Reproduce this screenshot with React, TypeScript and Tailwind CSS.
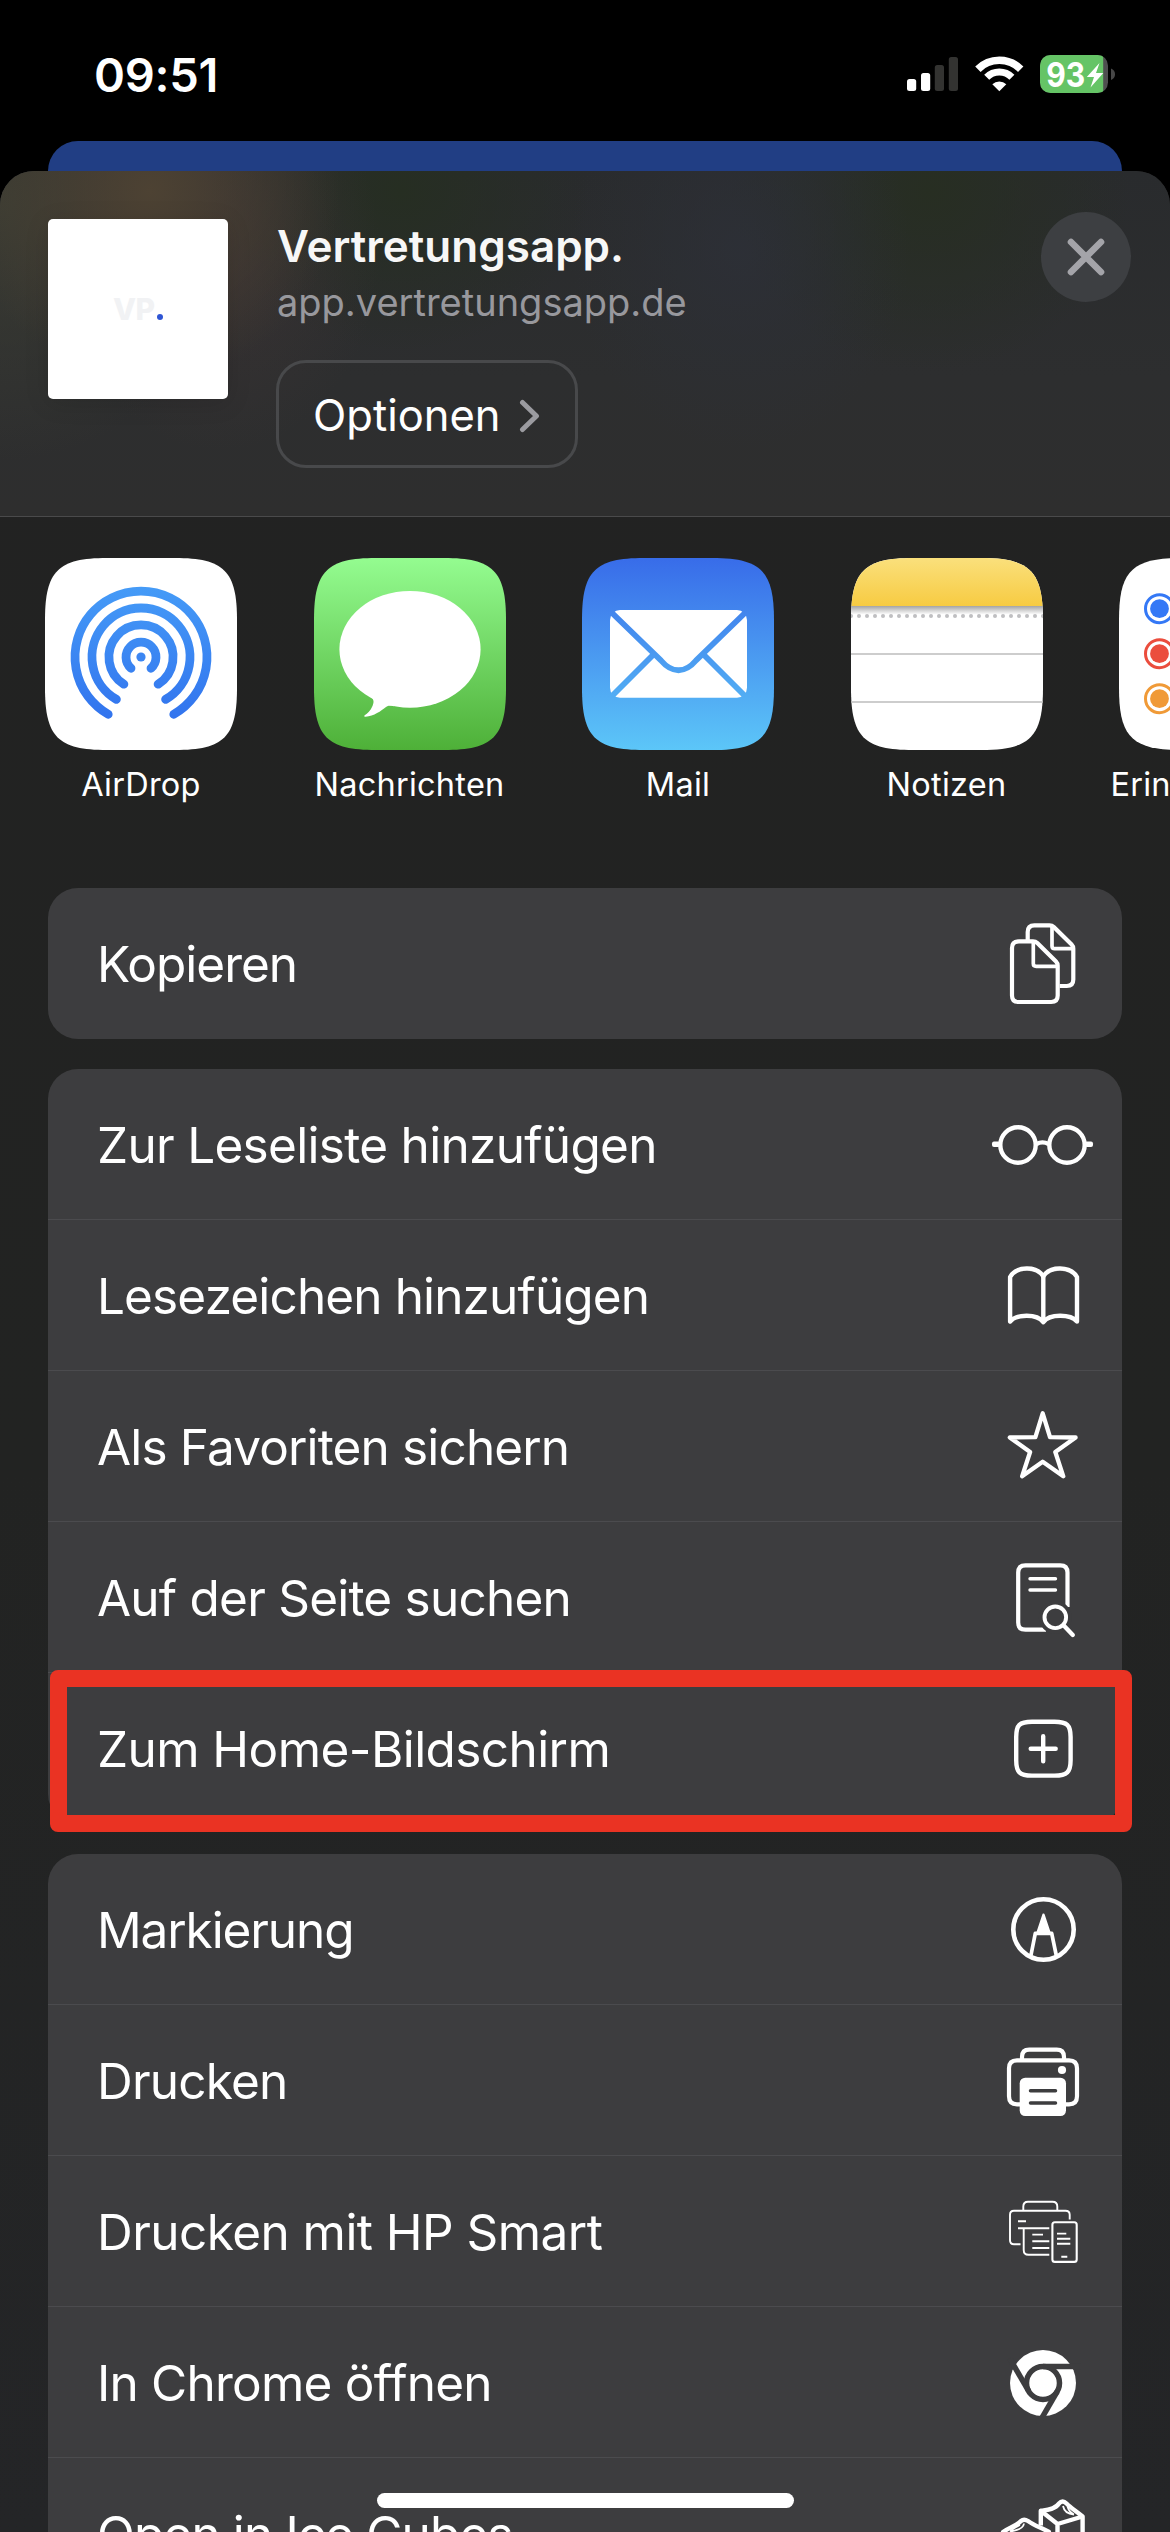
import type { ReactNode } from "react";

const TILE =
  "M62 0H130C179 0 192 13 192 62V130C192 179 179 192 130 192H62C13 192 0 179 0 130V62C0 13 13 0 62 0Z";

function StatusIcons() {
  return (
    <svg width="212" height="40" viewBox="905 54 212 40" fill="none">
      <rect x="907" y="79" width="9.2" height="12" rx="2.5" fill="#fff" />
      <rect x="921" y="73" width="9.2" height="18" rx="2.5" fill="#fff" />
      <rect x="934.8" y="65" width="9.2" height="26" rx="2.5" fill="#333331" />
      <rect x="948.8" y="57" width="9.2" height="34" rx="2.5" fill="#333331" />
      <g stroke="#fff">
        <path d="M977.9 69.2A30.2 30.2 0 0 1 1020.7 69.2" strokeWidth="7.6" />
        <path d="M986.7 77.2A17.6 17.6 0 0 1 1011.9 77.2" strokeWidth="7" />
      </g>
      <path d="M992.3 84.2A10.2 10.2 0 0 1 1006.3 84.2L999.3 91.2Z" fill="#fff" />
      <clipPath id="battery">
        <rect x="1040" y="55" width="68" height="38" rx="10.5" />
      </clipPath>
      <g clipPath="url(#battery)">
        <rect x="1040" y="55" width="68" height="38" fill="#4f4f50" />
        <rect x="1040" y="55" width="63.2" height="38" fill="#65c466" />
      </g>
      <path d="M1111 68.5Q1115 70 1115 74.2T1111 80Z" fill="#474747" />
      <text
        x="1046.2"
        y="86.6"
        fill="#fff"
        fontFamily="Inter, sans-serif"
        fontSize="34"
        fontWeight="700"
        textLength="39"
        lengthAdjust="spacingAndGlyphs"
      >
        93
      </text>
      <path d="M1099.5 63L1086.8 77H1094L1090.5 87.4L1103.3 73H1096Z" fill="#fff" />
    </svg>
  );
}

function AirDropIcon() {
  return (
    <svg width="192" height="192" viewBox="0 0 192 192" fill="none">
      <defs>
        <linearGradient id="air" gradientUnits="userSpaceOnUse" x1="0" y1="28" x2="0" y2="160">
          <stop stopColor="#459bf7" />
          <stop offset="1" stopColor="#3274ee" />
        </linearGradient>
      </defs>
      <path d={TILE} fill="#fff" />
      <g stroke="url(#air)" strokeWidth="8.8" strokeLinecap="round">
        <path d="M63.2 156.3A66 66 0 1 1 128.8 156.3" />
        <path d="M71.4 141.4A49 49 0 1 1 120.6 141.4" />
        <path d="M78.9 126.2A32.1 32.1 0 1 1 113.1 126.2" />
        <path d="M86 110.3A15 15 0 1 1 106 110.3" />
      </g>
      <circle cx="96" cy="99" r="4.6" fill="#3c86f2" />
    </svg>
  );
}

function MessagesIcon() {
  return (
    <svg width="192" height="192" viewBox="0 0 192 192">
      <defs>
        <linearGradient id="msg" x1="0" y1="0" x2="0" y2="1">
          <stop stopColor="#94fc90" />
          <stop offset="1" stopColor="#4eb038" />
        </linearGradient>
      </defs>
      <path d={TILE} fill="url(#msg)" />
      <ellipse cx="96" cy="91.3" rx="70.6" ry="58.4" fill="#fff" />
      <path d="M54 136C60 141 60.5 143 58.5 148C56.5 153 53.5 155.5 50.7 157.3C49.8 158.2 50.4 158.9 51.6 158.8C60 158 67 153 72 149C74 147.5 76 147.5 80 148.2L90 130L56 125Z" fill="#fff" />
    </svg>
  );
}

function MailIcon() {
  return (
    <svg width="192" height="192" viewBox="0 0 192 192" fill="none">
      <defs>
        <linearGradient id="mail" gradientUnits="userSpaceOnUse" x1="0" y1="0" x2="0" y2="192">
          <stop stopColor="#386ce9" />
          <stop offset="1" stopColor="#5cc6f8" />
        </linearGradient>
      </defs>
      <path d={TILE} fill="url(#mail)" />
      <rect x="28" y="52" width="137" height="87.7" rx="10" fill="#fff" />
      <g stroke="url(#mail)" strokeWidth="5.8">
        <path d="M27 52L79 102.5C90 115.5 103 115.5 114 102.5L166 52" />
        <path d="M27 141L71 97M166 141L122 97" />
      </g>
    </svg>
  );
}

function NotesIcon() {
  const dots = Array.from({ length: 25 }, (_, i) => i * 8);
  return (
    <svg width="192" height="192" viewBox="0 0 192 192">
      <defs>
        <linearGradient id="noteTop" x1="0" y1="0" x2="0" y2="1">
          <stop stopColor="#fae07c" />
          <stop offset="1" stopColor="#f7cb42" />
        </linearGradient>
        <linearGradient id="noteShade" x1="0" y1="0" x2="0" y2="1">
          <stop stopColor="#a4a4a4" />
          <stop offset="1" stopColor="#ffffff" />
        </linearGradient>
        <clipPath id="noteClip">
          <path d={TILE} />
        </clipPath>
      </defs>
      <g clipPath="url(#noteClip)">
        <rect width="192" height="192" fill="#fff" />
        <rect width="192" height="48" fill="url(#noteTop)" />
        <rect y="48" width="192" height="8.5" fill="url(#noteShade)" />
        {dots.map((x) => (
          <circle key={x} cx={x} cy="58" r="2" fill="#bfbfc1" />
        ))}
        <rect y="95" width="192" height="2" fill="#cdcdcd" />
        <rect y="143" width="192" height="2" fill="#cdcdcd" />
      </g>
    </svg>
  );
}

function RemindersIcon() {
  const items: [number, string][] = [
    [50.7, "#3478f6"],
    [95.7, "#eb4d3d"],
    [140.7, "#f09a37"],
  ];
  return (
    <svg width="192" height="192" viewBox="0 0 192 192">
      <path d={TILE} fill="#fff" />
      {items.map(([y, color]) => (
        <g key={color}>
          <circle cx="40.5" cy={y} r="14" fill="none" stroke={color} strokeWidth="3" />
          <circle cx="40.5" cy={y} r="9.4" fill={color} />
        </g>
      ))}
    </svg>
  );
}

function RowIcon({ children, stroke = 4.4 }: { children: ReactNode; stroke?: number }) {
  return (
    <svg
      width="120"
      height="150"
      viewBox="0 0 120 150"
      fill="none"
      stroke="#fff"
      strokeWidth={stroke}
      strokeLinejoin="round"
      className="shrink-0"
    >
      {children}
    </svg>
  );
}

const copyIcon = (
  <RowIcon stroke={4.2}>
    <path d="M36 53.3H50Q52.5 53.3 54.3 55.1L73 73.5Q74.7 75.2 74.7 77.7V107.5Q74.7 114 68.2 114H35.5Q29 114 29 107.5V60Q29 53.3 36 53.3Z" />
    <path d="M50.3 54V75.5Q50.3 78.3 53.1 78.3H74" strokeWidth="3.7" />
    <path d="M44.7 52V44Q44.7 37.3 51.4 37.3H66.5Q69 37.3 70.8 39.1L88.6 56.5Q90.3 58.2 90.3 60.7V91.5Q90.3 98 83.8 98H76.7" />
    <path d="M69 38V58Q69 60.7 71.7 60.7H90" strokeWidth="3.7" />
  </RowIcon>
);

const glassesIcon = (
  <RowIcon>
    <circle cx="35" cy="76" r="17.7" />
    <circle cx="84" cy="76" r="17.7" />
    <path d="M53.5 75Q59.5 71.8 65.5 75" />
    <rect x="9" y="72.6" width="8" height="5.5" rx="2" fill="#fff" stroke="none" />
    <rect x="102" y="72.6" width="8" height="5.5" rx="2" fill="#fff" stroke="none" />
  </RowIcon>
);

const bookIcon = (
  <RowIcon>
    <path d="M27.1 57C33.5 45.7 54 45.7 60.3 56.5C66.6 45.7 87.5 45.7 94 57V101.5C87.5 94 66.6 93.5 60.3 102.2C54 93.5 33.5 94 27.1 101.5Z" />
    <path d="M60.3 56.5V102.2" />
  </RowIcon>
);

const starIcon = (
  <RowIcon stroke={4.3}>
    <path d="M59.7 42.3L67 66.2L92.6 66.5L72.3 81L80.3 105.3L59.7 90.8L39.1 105.3L47.1 81L26.8 66.5L52.4 66.2Z" />
  </RowIcon>
);

const findIcon = (
  <RowIcon stroke={4.2}>
    <path d="M63 107.7H42.5Q35.2 107.7 35.2 100.4V50.6Q35.2 43.3 42.5 43.3H77.2Q84.5 43.3 84.5 50.6V85" />
    <path d="M47 56.7H72.5M47 68H72.5" strokeWidth="3.4" strokeLinecap="round" />
    <circle cx="72.3" cy="95.3" r="13.5" stroke="#3d3d3f" strokeWidth="6" />
    <circle cx="72.3" cy="95.3" r="10.8" strokeWidth="3.9" />
    <path d="M80.5 103.3L89.8 113" strokeWidth="4.3" strokeLinecap="round" />
  </RowIcon>
);

const plusIcon = (
  <RowIcon>
    <path d="M49 48.7H71.5C84 48.7 87.6 52 87.6 64V87.2C87.6 99 84 102.6 71.5 102.6H49C36.5 102.6 33.2 99 33.2 87.2V64C33.2 52 36.5 48.7 49 48.7Z" />
    <path d="M60.2 63.2V88.2M47.7 75.7H72.7" strokeLinecap="round" />
  </RowIcon>
);

const markupIcon = (
  <RowIcon>
    <circle cx="60.5" cy="75.5" r="30.2" strokeWidth="4.6" />
    <path d="M47.9 101.5L52.3 79.3H68.7L73.3 101.5" strokeWidth="3.7" />
    <path d="M60.5 60.8L54.5 79H66.5Z" fill="#fff" strokeWidth="2.5" />
  </RowIcon>
);

const printerIcon = (
  <RowIcon stroke={4.2}>
    <path d="M38 99.3H34Q26 99.3 26 91.3V63.3Q26 55.3 34 55.3H86Q94 55.3 94 63.3V91.3Q94 99.3 86 99.3H82" />
    <path d="M39 55V52Q39 44.7 46.3 44.7H73.7Q81 44.7 81 52V55" />
    <circle cx="79" cy="65" r="4.1" fill="#fff" stroke="none" />
    <rect x="36.7" y="72.7" width="46.3" height="38.3" rx="5.5" fill="#fff" stroke="none" />
    <path d="M47.5 85.7H72.5M47.5 98H72.5" stroke="#3d3d3f" strokeWidth="3.5" strokeLinecap="round" />
  </RowIcon>
);

const hpSmartIcon = (
  <RowIcon stroke={1.9}>
    <path d="M37.5 88.3H31Q27 88.3 27 84.3V58.7Q27 54.7 31 54.7H82.5Q86.7 54.7 86.7 58.7V63.5" />
    <path d="M40.3 54.5V50.5Q40.3 45.7 45 45.7H69.5Q74.3 45.7 74.3 50.5V54.5" />
    <path d="M35 65.2H43M35 72.3H66.3M40.7 72.5V94Q40.7 98.8 45.5 98.8H66.3" />
    <path d="M49.3 78.6H60M49.3 85.3H66.3M49.3 92H66.3" />
    <rect x="69.4" y="66.2" width="24.3" height="39.7" rx="2.5" strokeWidth="2.1" />
    <path d="M74 77.6H83.3M74 82.7H87.3M74 87.7H87.3M78.3 100.7H84.3" />
  </RowIcon>
);

const chromeIcon = (
  <RowIcon>
    <circle cx="60" cy="76" r="33" fill="#fff" stroke="none" />
    <circle cx="60" cy="76" r="16.5" stroke="#3d3d3f" strokeWidth="5.5" />
    <g stroke="#3d3d3f" strokeWidth="5.5">
      <path d="M60 59.5H98" />
      <path d="M60 59.5H98" transform="rotate(120 60 76)" />
      <path d="M60 59.5H98" transform="rotate(240 60 76)" />
    </g>
  </RowIcon>
);

const cubesIcon = (
  <RowIcon>
    <path d="M57.8 67.5V52.8C64 52 72 51.5 76 45.5Q79.5 41.5 83.5 45.5C88 50 93 53 99.6 58.5V90" />
    <path d="M57.8 52.8L74.5 66L99.6 58.5M74.5 66V90" />
    <path d="M80 48C81 53 84 56 91 56.5M84.5 48.5C85.5 52 87 54.5 91 56.5" strokeWidth="1.8" />
    <path d="M20 90V74C27 69 34 67.5 38 63Q41 60.5 45 63C52 68 58 69.5 66 74V90" />
    <path d="M20 74L42 86L66 74" />
    <path d="M41 65.5C40.5 70 34 72.5 27 73.5M37 67C33 69 29 71 27 73.5" strokeWidth="1.8" />
  </RowIcon>
);

type RowData = { label: string; icon: ReactNode; spacing: string };

function Group({ rows, open = false }: { rows: RowData[]; open?: boolean }) {
  return (
    <div
      className={
        open
          ? "shrink-0 rounded-t-[30px] bg-[#3d3d3f]"
          : "shrink-0 overflow-hidden rounded-[30px] bg-[#3d3d3f]"
      }
    >
      {rows.map((row, i) => (
        <div
          key={row.label}
          className={
            i < rows.length - 1
              ? "flex h-[151px] items-center justify-between border-b border-[#4b4b4e] pr-[19px] pl-[49px]"
              : "flex h-[151px] items-center justify-between pr-[19px] pb-px pl-[49px]"
          }
        >
          <span className={`pt-px text-[49.5px] leading-[60px] whitespace-nowrap text-white ${row.spacing}`}>
            {row.label}
          </span>
          {row.icon}
        </div>
      ))}
    </div>
  );
}

const copyRows: RowData[] = [{ label: "Kopieren", icon: copyIcon, spacing: "tracking-[-1px]" }];

const pageRows: RowData[] = [
  { label: "Zur Leseliste hinzufügen", icon: glassesIcon, spacing: "tracking-[-0.7px]" },
  { label: "Lesezeichen hinzufügen", icon: bookIcon, spacing: "tracking-[-0.87px]" },
  { label: "Als Favoriten sichern", icon: starIcon, spacing: "tracking-[-0.85px]" },
  { label: "Auf der Seite suchen", icon: findIcon, spacing: "tracking-[-0.78px]" },
  { label: "Zum Home-Bildschirm", icon: plusIcon, spacing: "tracking-[-0.58px]" },
];

const toolRows: RowData[] = [
  { label: "Markierung", icon: markupIcon, spacing: "tracking-[-1.1px]" },
  { label: "Drucken", icon: printerIcon, spacing: "tracking-[-0.8px]" },
  { label: "Drucken mit HP Smart", icon: hpSmartIcon, spacing: "tracking-[-0.55px]" },
  { label: "In Chrome öffnen", icon: chromeIcon, spacing: "tracking-[-0.78px]" },
  { label: "Open in Ice Cubes", icon: cubesIcon, spacing: "tracking-[-0.87px]" },
];

const apps = [
  { name: "AirDrop", icon: <AirDropIcon /> },
  { name: "Nachrichten", icon: <MessagesIcon /> },
  { name: "Mail", icon: <MailIcon /> },
  { name: "Notizen", icon: <NotesIcon /> },
  { name: "Erinnerungen", icon: <RemindersIcon /> },
];

export default function App() {
  return (
    <div className="relative flex h-[2532px] w-[1170px] flex-col overflow-hidden bg-black font-['Inter',sans-serif]">
      <div className="flex h-[141px] shrink-0 items-start justify-between pt-[46px] pr-[53px] pl-[94px]">
        <span className="text-[47px] leading-[57px] font-semibold tracking-[-0.3px] text-white">09:51</span>
        <div className="pt-[8px]">
          <StatusIcons />
        </div>
      </div>

      <div className="mx-12 -mb-[32px] h-[62px] shrink-0 rounded-t-[30px] bg-[#213e84]" />

      <div className="relative flex min-h-0 flex-1 flex-col overflow-hidden rounded-t-[34px] bg-[linear-gradient(180deg,#222222_0%,#222322_55%,#242527_100%)]">
        <header className="flex h-[346px] shrink-0 items-start border-b border-[#4a4a4b] bg-[radial-gradient(ellipse_190px_190px_at_150px_20px,#4d4233_0%,#4d423300_100%),radial-gradient(ellipse_160px_200px_at_220px_80px,#44373688_0%,#44373600_100%),radial-gradient(ellipse_190px_160px_at_400px_20px,#262e22_0%,#262e2200_100%),radial-gradient(ellipse_170px_200px_at_740px_80px,#2d3038cc_0%,#2d303800_100%),radial-gradient(ellipse_200px_180px_at_930px_20px,#272e22_0%,#272e2200_100%),radial-gradient(ellipse_240px_260px_at_0px_30px,#3b3c33_0%,#3b3c3300_100%),linear-gradient(180deg,#292b2d_0%,#2d2e2f_60%,#2e2e2e_100%)] pt-[48px] pr-[39px] pl-12">
          <div className="flex h-[180px] w-[180px] shrink-0 items-center justify-center rounded-[5px] bg-white shadow-[0_4px_24px_rgba(0,0,0,0.12)]">
            <div className="flex items-baseline text-[30px] leading-none font-extrabold text-[#f1f2f4]">
              <span className="tracking-[-0.5px]">VP</span>
              <span className="ml-[2px] h-[6.5px] w-[6.5px] rounded-full bg-[#2f55d4]" />
            </div>
          </div>
          <div className="ml-12 flex flex-1 flex-col items-start pl-px">
            <h1 className="mt-[1px] text-[44px] leading-[53px] font-semibold tracking-[0px] whitespace-nowrap text-[#f7f7f7]">
              Vertretungsapp.
            </h1>
            <p className="mt-[4px] text-[38px] leading-[50px] whitespace-nowrap text-[#98989d]">
              app.vertretungsapp.de
            </p>
            <button className="mt-[33px] -ml-px flex h-[108px] w-[302px] items-center justify-between rounded-[30px] border-[3px] border-[#48494b] pt-[3px] pr-[34px] pl-[34px] text-[43.5px] leading-none text-white">
              <span>Optionen</span>
              <svg width="22" height="34" viewBox="0 0 22 34" fill="none" className="shrink-0">
                <path d="M3.5 3.5L17.5 17L3.5 30.5" stroke="#9b9ba0" strokeWidth="5" strokeLinecap="round" strokeLinejoin="round" />
              </svg>
            </button>
          </div>
          <div className="-mt-[7px] flex h-[90px] w-[90px] shrink-0 items-center justify-center rounded-full bg-[#3d3f42]">
            <svg width="40" height="40" viewBox="0 0 40 40" fill="none">
              <path d="M5 5L35 35M35 5L5 35" stroke="#a4a4a9" strokeWidth="6.6" strokeLinecap="round" />
            </svg>
          </div>
        </header>

        <div className="flex h-[371px] shrink-0 gap-[76.5px] pt-[41px] pl-[45px]">
          {apps.map((app) => (
            <div key={app.name} className="flex w-[192px] shrink-0 flex-col items-center">
              {app.icon}
              <span className="mt-[15px] text-[32.5px] leading-[40px] tracking-[0.25px] whitespace-nowrap text-white">
                {app.name}
              </span>
            </div>
          ))}
        </div>

        <div className="flex flex-col gap-[30px] px-12">
          <Group rows={copyRows} />
          <div className="relative shrink-0">
            <Group rows={pageRows} />
            <div className="absolute bottom-[-8px] left-[2px] h-[162px] w-[1082px] rounded-[8px] border-[17px] border-[#ea3323]" />
          </div>
          <Group rows={toolRows} open />
        </div>
      </div>

      <div className="absolute bottom-[24px] left-[377px] h-[15px] w-[417px] rounded-full bg-white" />
    </div>
  );
}
